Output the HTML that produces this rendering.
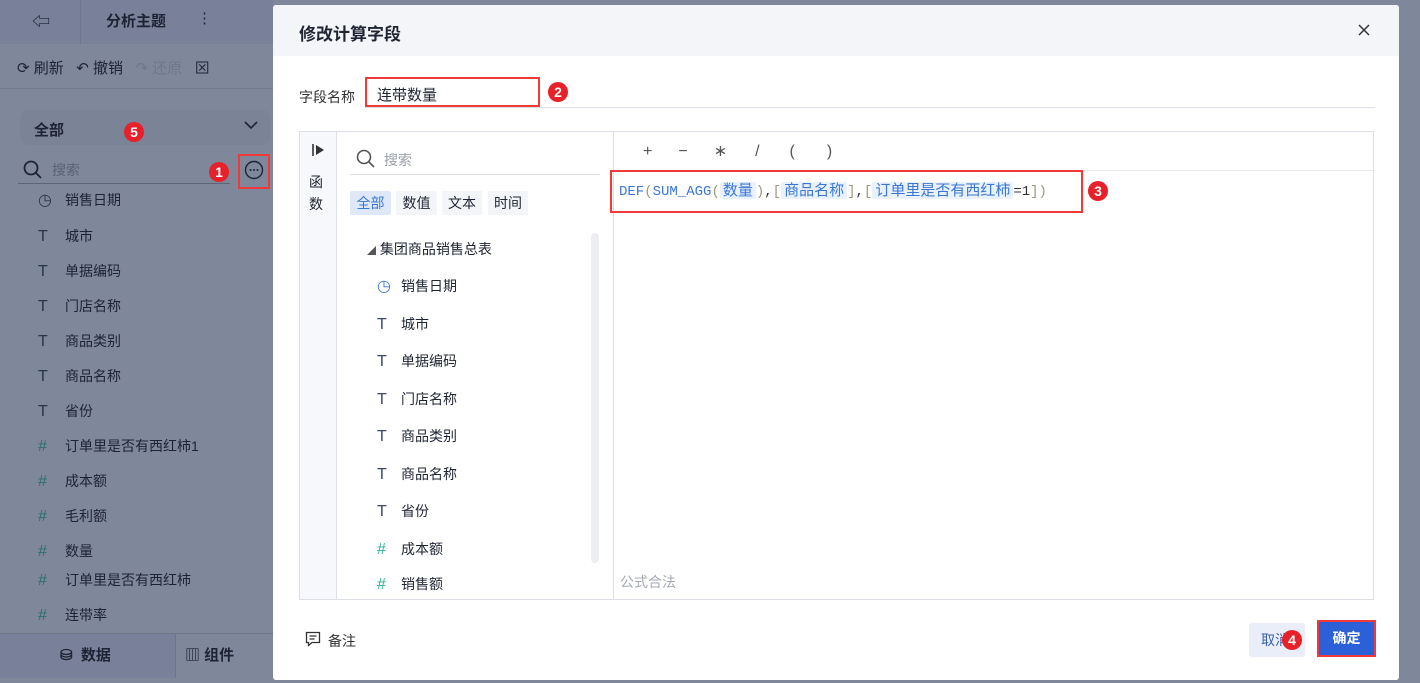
<!DOCTYPE html>
<html><head><meta charset="utf-8"><style>
*{box-sizing:border-box;margin:0;padding:0}
body{width:1420px;height:683px;overflow:hidden;position:relative;background:#7f879a;font-family:"Liberation Sans","Noto Sans CJK SC",sans-serif;font-size:14px;color:#1f2533}
.a{position:absolute}
.lp{color:#1d2333}
.badge{position:absolute;width:20px;height:20px;border-radius:50%;background:#e8202a;color:#fff;font-size:14px;text-align:center;line-height:20px;font-weight:bold}
.rb{position:absolute;border:2px solid #f03a3a}
.item{position:absolute;left:38px;font-size:14px;color:#1d2333}
.ic{display:inline-block;width:27px;color:#26364a;font-size:16px}
.tk{background:#e9f1fc;color:#3a77d6;padding:0 3px;border-radius:2px;font-family:"Liberation Sans","Noto Sans CJK SC",sans-serif;font-size:15px}
.g{color:#9a9a80}
</style></head><body>
<div class="a" style="left:0;top:0;width:273px;height:44px;background:#79819a"></div>
<div class="a" style="left:80px;top:0;width:1px;height:44px;background:#6f778c"></div>
<div class="a lp" style="left:32px;top:8px;font-size:18px">⇦</div>
<div class="a lp" style="left:106px;top:10px;font-size:15px;font-weight:bold">分析主题</div>
<div class="a lp" style="left:197px;top:9px;font-size:15px">⋮</div>
<div class="a" style="left:0;top:88px;width:273px;height:1px;background:#737b8f"></div>
<div class="a lp" style="left:17px;top:57px;font-size:15px">⟳ 刷新 &nbsp; ↶ 撤销 &nbsp; <span style="color:#6e778c">↷ 还原</span> &nbsp; ⊠</div>
<div class="a" style="left:20px;top:110px;width:250px;height:35px;background:#7b8396;border-radius:8px"></div>
<div class="a lp" style="left:34px;top:119px;font-weight:bold;font-size:15px">全部</div>
<svg class="a" style="left:244px;top:121px" width="14" height="9"><path d="M1 1l6 6 6-6" fill="none" stroke="#1d2333" stroke-width="1.6"/></svg>
<div class="badge" style="left:124px;top:122px">5</div>
<svg class="a" style="left:23px;top:160px" width="20" height="20"><circle cx="8" cy="8" r="6.5" fill="none" stroke="#1d2333" stroke-width="1.8"/><path d="M13 13l5 5" stroke="#1d2333" stroke-width="1.8"/></svg>
<div class="a" style="left:52px;top:160px;color:#5a6275;font-size:14px">搜索</div>
<div class="a" style="left:18px;top:183px;width:212px;height:1px;background:#5d6578"></div>
<div class="badge" style="left:209px;top:162px">1</div>
<div class="rb" style="left:238px;top:154px;width:32px;height:35px"></div>
<svg class="a" style="left:244px;top:160px" width="20" height="20"><circle cx="10" cy="10" r="8.5" fill="none" stroke="#1d2333" stroke-width="1.4"/><circle cx="6.5" cy="10" r="1" fill="#1d2333"/><circle cx="10" cy="10" r="1" fill="#1d2333"/><circle cx="13.5" cy="10" r="1" fill="#1d2333"/></svg>
<div class="item" style="top:190px"><span class="ic">◷</span>销售日期</div>
<div class="item" style="top:226px"><span class="ic">T</span>城市</div>
<div class="item" style="top:261px"><span class="ic">T</span>单据编码</div>
<div class="item" style="top:296px"><span class="ic">T</span>门店名称</div>
<div class="item" style="top:331px"><span class="ic">T</span>商品类别</div>
<div class="item" style="top:366px"><span class="ic">T</span>商品名称</div>
<div class="item" style="top:401px"><span class="ic">T</span>省份</div>
<div class="item" style="top:436px"><span class="ic" style="color:#2f6e72">#</span>订单里是否有西红柿1</div>
<div class="item" style="top:471px"><span class="ic" style="color:#2f6e72">#</span>成本额</div>
<div class="item" style="top:506px"><span class="ic" style="color:#2f6e72">#</span>毛利额</div>
<div class="item" style="top:541px"><span class="ic" style="color:#2f6e72">#</span>数量</div>
<div class="item" style="top:570px"><span class="ic" style="color:#2f6e72">#</span>订单里是否有西红柿</div>
<div class="item" style="top:605px"><span class="ic" style="color:#2f6e72">#</span>连带率</div>
<div class="a" style="left:0;top:633px;width:175px;height:45px;background:#79819a;border-top:1px solid #6d758a"></div>
<div class="a" style="left:175px;top:633px;width:98px;height:45px;border-left:1px solid #6d758a;border-top:1px solid #6d758a"></div>
<div class="a lp" style="left:60px;top:644px;font-size:15px;font-weight:bold">⛁ &nbsp;数据</div>
<div class="a lp" style="left:185px;top:644px;font-size:15px;font-weight:bold">▥ 组件</div>

<div class="a" style="left:273px;top:5px;width:1126px;height:675px;background:#fff;border-radius:3px;overflow:hidden">
<div class="a" style="left:0;top:0;width:1126px;height:51px;background:#f4f5f8"></div>
<div class="a" style="left:26px;top:15px;font-size:17px;font-weight:bold;color:#1f2533">修改计算字段</div>
<svg class="a" style="left:1085px;top:19px" width="12" height="12"><path d="M1 1l10 10M11 1L1 11" stroke="#333" stroke-width="1.5"/></svg>
<div class="a" style="left:26px;top:82px;font-size:14px;color:#333">字段名称</div>
<div class="a" style="left:92px;top:102px;width:1010px;height:1px;background:#dcdfe6"></div>
<div class="rb" style="left:92px;top:72px;width:175px;height:30px"></div>
<div class="a" style="left:104px;top:79px;font-size:15px">连带数量</div>
<div class="badge" style="left:275px;top:77px">2</div>
<div class="a" style="left:26px;top:126px;width:1075px;height:469px;border:1px solid #dcdfe6"></div>
<div class="a" style="left:27px;top:127px;width:37px;height:467px;background:#f6f8fc;border-right:1px solid #dcdfe6"></div>
<svg class="a" style="left:39px;top:139px" width="14" height="12"><path d="M1 0v12" stroke="#333" stroke-width="1.6"/><path d="M4 1l8 5-8 5z" fill="#333"/></svg>
<div class="a" style="left:36px;top:166px;font-size:14px;line-height:22px;width:20px">函数</div>
<div class="a" style="left:340px;top:127px;width:1px;height:467px;background:#dcdfe6"></div>
<svg class="a" style="left:83px;top:144px" width="20" height="20"><circle cx="8" cy="8" r="6.5" fill="none" stroke="#555" stroke-width="1.6"/><path d="M13 13l5 5" stroke="#555" stroke-width="1.6"/></svg>
<div class="a" style="left:111px;top:145px;color:#9aa0ab">搜索</div>
<div class="a" style="left:77px;top:169px;width:250px;height:1px;background:#dcdfe6"></div>
<div class="a" style="left:77px;top:186px;width:41px;height:24px;background:#dfe8f9;color:#3a77d6;text-align:center;line-height:24px;border-radius:2px">全部</div>
<div class="a" style="left:123px;top:186px;width:41px;height:24px;background:#f3f5f9;text-align:center;line-height:24px">数值</div>
<div class="a" style="left:169px;top:186px;width:40px;height:24px;background:#f3f5f9;text-align:center;line-height:24px">文本</div>
<div class="a" style="left:215px;top:186px;width:40px;height:24px;background:#f3f5f9;text-align:center;line-height:24px">时间</div>
<div class="a" style="left:318px;top:228px;width:8px;height:330px;background:#eceef2;border-radius:4px"></div>
<div class="a" style="left:94px;top:234px;font-size:14px"><span style="font-size:9px;color:#555">◢</span> 集团商品销售总表</div>
<div class="a" style="left:104px;top:271px"><span style="color:#3a77d6;display:inline-block;width:24px;font-size:16px">◷</span>销售日期</div>
<div class="a" style="left:104px;top:309px"><span style="display:inline-block;width:24px;color:#3a4a66;font-size:16px">T</span>城市</div>
<div class="a" style="left:104px;top:346px"><span style="display:inline-block;width:24px;color:#3a4a66;font-size:16px">T</span>单据编码</div>
<div class="a" style="left:104px;top:384px"><span style="display:inline-block;width:24px;color:#3a4a66;font-size:16px">T</span>门店名称</div>
<div class="a" style="left:104px;top:421px"><span style="display:inline-block;width:24px;color:#3a4a66;font-size:16px">T</span>商品类别</div>
<div class="a" style="left:104px;top:459px"><span style="display:inline-block;width:24px;color:#3a4a66;font-size:16px">T</span>商品名称</div>
<div class="a" style="left:104px;top:496px"><span style="display:inline-block;width:24px;color:#3a4a66;font-size:16px">T</span>省份</div>
<div class="a" style="left:104px;top:534px"><span style="display:inline-block;width:24px;color:#2bb39a;font-size:16px">#</span>成本额</div>
<div class="a" style="left:104px;top:569px;height:20px;overflow:hidden"><span style="display:inline-block;width:24px;color:#2bb39a;font-size:16px">#</span>销售额</div>
<div class="a" style="left:341px;top:165px;width:759px;height:1px;background:#e6e8ec"></div>
<div class="a" style="left:370px;top:136px;font-size:16px;color:#555"><span style="margin-right:26px">+</span><span style="margin-right:26px">−</span><span style="margin-right:28px">∗</span><span style="margin-right:30px">/</span><span style="margin-right:32px">(</span><span>)</span></div>
<div class="rb" style="left:337px;top:165px;width:473px;height:43px"></div>
<div class="a" style="left:346px;top:174px;font-family:'Liberation Mono','Noto Sans CJK SC',monospace;font-size:14px;color:#3a77d6;white-space:nowrap">DEF<span class="g">(</span>SUM_AGG<span class="g">(</span><span class="tk">数量</span><span class="g">)</span><span style="color:#333">,</span><span class="g">[</span><span class="tk">商品名称</span><span class="g">]</span><span style="color:#333">,</span><span class="g">[</span><span class="tk">订单里是否有西红柿</span><span style="color:#333">=1</span><span class="g">])</span></div>
<div class="badge" style="left:815px;top:176px">3</div>
<div class="a" style="left:347px;top:567px;color:#a5aab3;font-size:14px">公式合法</div>
<svg class="a" style="left:32px;top:626px" width="16" height="16"><path d="M1.5 1.5h13v10H7l-3.5 3v-3h-2z" fill="none" stroke="#333" stroke-width="1.3"/><path d="M4.5 5h7M4.5 8h5" stroke="#333" stroke-width="1.2"/></svg>
<div class="a" style="left:55px;top:626px;font-size:14px;color:#333">备注</div>
<div class="a" style="left:976px;top:618px;width:56px;height:34px;background:#e9eef9;border-radius:3px;color:#3a5fb0;line-height:34px;padding-left:12px">取消</div>
<div class="badge" style="left:1009px;top:625px">4</div>
<div class="a" style="left:1044px;top:615px;width:59px;height:37px;background:#2b60d9;border:2px solid #f03a3a;color:#fff;text-align:center;line-height:33px;font-weight:bold">确定</div>
</div>
</body></html>
